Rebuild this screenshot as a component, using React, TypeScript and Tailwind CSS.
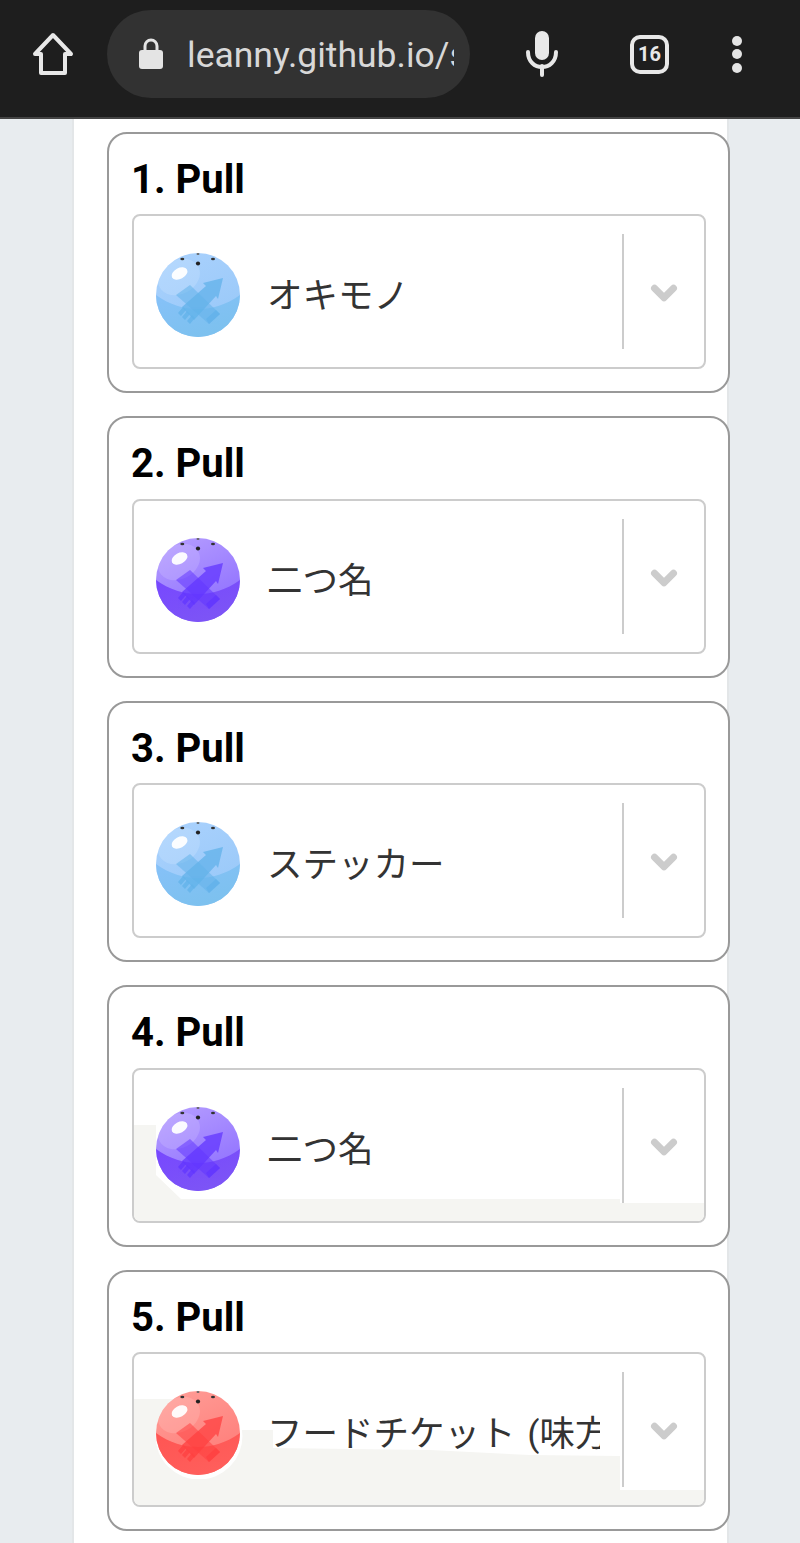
import { ChevronDown } from 'lucide-react';

type Tint = 'blue' | 'purple' | 'red';

const tints = {
  blue: { top: '#a9d1fd', mid: '#98c8f8', low: '#86c1f8', low2: '#7cc1ee', mark: '#62b2ea', shine: '#d7eaff' },
  purple: { top: '#b49cff', mid: '#8c6cff', low: '#7748ff', low2: '#7d55f5', mark: '#6236ff', shine: '#d9ccff' },
  red: { top: '#ff9c96', mid: '#ff7a76', low: '#ff5553', low2: '#ff5f5c', mark: '#ff4040', shine: '#ffd0cc' },
};

const pulls: { n: number; tint: Tint; label: string; stain?: string }[] = [
  { n: 1, tint: 'blue', label: 'オキモノ' },
  { n: 2, tint: 'purple', label: '二つ名' },
  { n: 3, tint: 'blue', label: 'ステッカー' },
  {
    n: 4,
    tint: 'purple',
    label: '二つ名',
    stain: '0,55 22,55 22,105 47,129 486,129 486,133 570,133 570,151 0,151',
  },
  {
    n: 5,
    tint: 'red',
    label: 'フードチケット (味方',
    stain: '0,45 60,45 60,76 139,76 139,94 296,96 396,101 486,102 486,136 570,136 570,151 0,151',
  },
];

function Ball({ tint }: { tint: Tint }) {
  const c = tints[tint];
  return (
    <svg width="92" height="92" viewBox="-4 -4 92 92" className="shrink-0">
      <defs>
        <linearGradient id={`upper-${tint}`} x1="0.2" y1="0" x2="0.7" y2="1">
          <stop offset="0" stopColor={c.top} />
          <stop offset="1" stopColor={c.mid} />
        </linearGradient>
        <linearGradient id={`lower-${tint}`} x1="0" y1="0" x2="0.7" y2="1">
          <stop offset="0" stopColor={c.low} />
          <stop offset="1" stopColor={c.low2} />
        </linearGradient>
        <clipPath id={`clip-${tint}`}>
          <circle cx="42" cy="42" r="42" />
        </clipPath>
      </defs>
      <circle cx="43" cy="45" r="43.5" fill="#fff" />
      <g clipPath={`url(#clip-${tint})`}>
        <rect width="84" height="84" fill={`url(#upper-${tint})`} />
        <path d="M0 42 C14 52 28 56 42 56 C56 56 70 52 84 42 V84 H0 Z" fill={`url(#lower-${tint})`} />
        <ellipse cx="23" cy="24" rx="22" ry="17" transform="rotate(-28 23 24)" fill={c.shine} opacity="0.25" />
        <path d="M67 25 L47 30 L50 33 L26 54 L38 67 L60 43 L62 46 Z" fill={c.mark} opacity="0.75" />
        <path d="M20 42 L34 32 L64 61 L53 71 Z" fill={c.mark} opacity="0.55" />
        <g fill={c.mark} opacity="0.75">
          <path d="M22 60 L27 54 L30 57 L25 63 Z M26 64 L31 58 L34 61 L29 67 Z M31 68 L36 62 L39 65 L34 71 Z" />
          <path d="M50 66 L60 57 L64 61 L53 71 Z" />
        </g>
        <ellipse cx="23.5" cy="20.5" rx="8.5" ry="5.5" transform="rotate(-28 23.5 20.5)" fill="#fff" opacity="0.95" />
      </g>
      <circle cx="42" cy="10.5" r="2.1" fill="#222" />
      <ellipse cx="26.3" cy="6" rx="2" ry="1.3" fill="#333" />
      <ellipse cx="57" cy="6" rx="2" ry="1.3" fill="#333" />
      <ellipse cx="42" cy="1" rx="1.5" ry="1" fill="#666" />
    </svg>
  );
}

function PullCard({ n, tint, label, stain }: (typeof pulls)[number]) {
  return (
    <div className="mb-[23px] h-[261.5px] w-[623px] rounded-[20px] border-2 border-[#999] bg-white pl-[23px] pr-[22px]">
      <h2 className="-ml-px flex h-[80.5px] items-center pt-[12px] text-[40px] leading-none font-bold text-black">{n}. Pull</h2>
      <div className="relative flex h-[155px] w-[574px] items-center rounded-[8px] border-2 border-[#ccc] bg-white">
        {stain && (
          <svg className="absolute inset-0 h-full w-full rounded-[6px]" viewBox="0 0 570 151">
            <polygon points={stain} fill="#f5f5f2" />
          </svg>
        )}
        <div className="relative flex min-w-0 flex-1 items-center pt-[7px] pl-[18px]">
          <Ball tint={tint} />
          <span className="ml-[23px] w-[333px] overflow-hidden pt-[2px] text-[35.5px] leading-[46px] whitespace-nowrap text-[#333] [word-spacing:3px]">
            {label}
          </span>
        </div>
        <div className="relative h-[115px] w-[2px] bg-[#ccc]" />
        <div className="relative flex w-[80px] items-center justify-center pt-[3px]">
          <ChevronDown size={38} strokeWidth={4.4} className="text-[#ccc]" />
        </div>
      </div>
    </div>
  );
}

export default function App() {
  return (
    <div
      className="h-[1543px] w-[800px] overflow-hidden bg-[#e8ecef]"
      style={{ fontFamily: 'Roboto, "Noto Sans CJK JP", sans-serif' }}
    >
      <header className="flex h-[119px] items-center border-b-2 border-[#444] bg-[#1e1e1e] pb-[9px]">
        <svg width="42" height="44" viewBox="0 0 42 44" className="ml-[32px]" fill="none" stroke="#e8e8e8" strokeWidth="4" strokeLinejoin="round">
          <path d="M21 3 L39 22 H33 V41 H9 V22 H3 Z" />
        </svg>
        <div className="ml-[33px] flex h-[88px] w-[363px] items-center rounded-[44px] bg-[#323232] pl-[32px]">
          <svg width="24" height="32" viewBox="0 0 24 32" fill="#e4e4e4" className="shrink-0">
            <path d="M3 12 H21 a3 3 0 0 1 3 3 V28 a3 3 0 0 1 -3 3 H3 a3 3 0 0 1 -3 -3 V15 a3 3 0 0 1 3 -3 Z" />
            <path d="M6 13 V8 a6 6 0 0 1 12 0 V13" fill="none" stroke="#e4e4e4" strokeWidth="3" />
          </svg>
          <span className="ml-[24px] w-[267px] overflow-hidden pt-[3px] text-[35.5px] whitespace-nowrap text-[#d8d8d8]">
            leanny.github.io/s
          </span>
        </div>
        <svg width="32" height="46" viewBox="0 0 32 46" className="ml-[56px]" fill="none" stroke="#e8e8e8" strokeWidth="4" strokeLinecap="round">
          <rect x="9" y="0" width="14" height="29" rx="7" fill="#e8e8e8" stroke="none" />
          <path d="M2 21 C2 41 30 41 30 21" />
          <path d="M16 35 V44" />
        </svg>
        <div className="ml-[72px] flex h-[39px] w-[39px] items-center justify-center rounded-[10px] border-[4px] border-[#e8e8e8] text-[20px] font-bold text-[#e8e8e8]">
          16
        </div>
        <div className="ml-[63px] flex flex-col gap-[3.5px]">
          <div className="h-[10px] w-[10px] rounded-full bg-[#e4e4e4]" />
          <div className="h-[10px] w-[10px] rounded-full bg-[#e4e4e4]" />
          <div className="h-[10px] w-[10px] rounded-full bg-[#e4e4e4]" />
        </div>
      </header>
      <main className="ml-[72px] h-[1424px] w-[657px] border-x-2 border-[#e3e6e8] bg-white pt-[12.5px] pl-[33px]">
        {pulls.map((p) => (
          <PullCard key={p.n} {...p} />
        ))}
      </main>
    </div>
  );
}
